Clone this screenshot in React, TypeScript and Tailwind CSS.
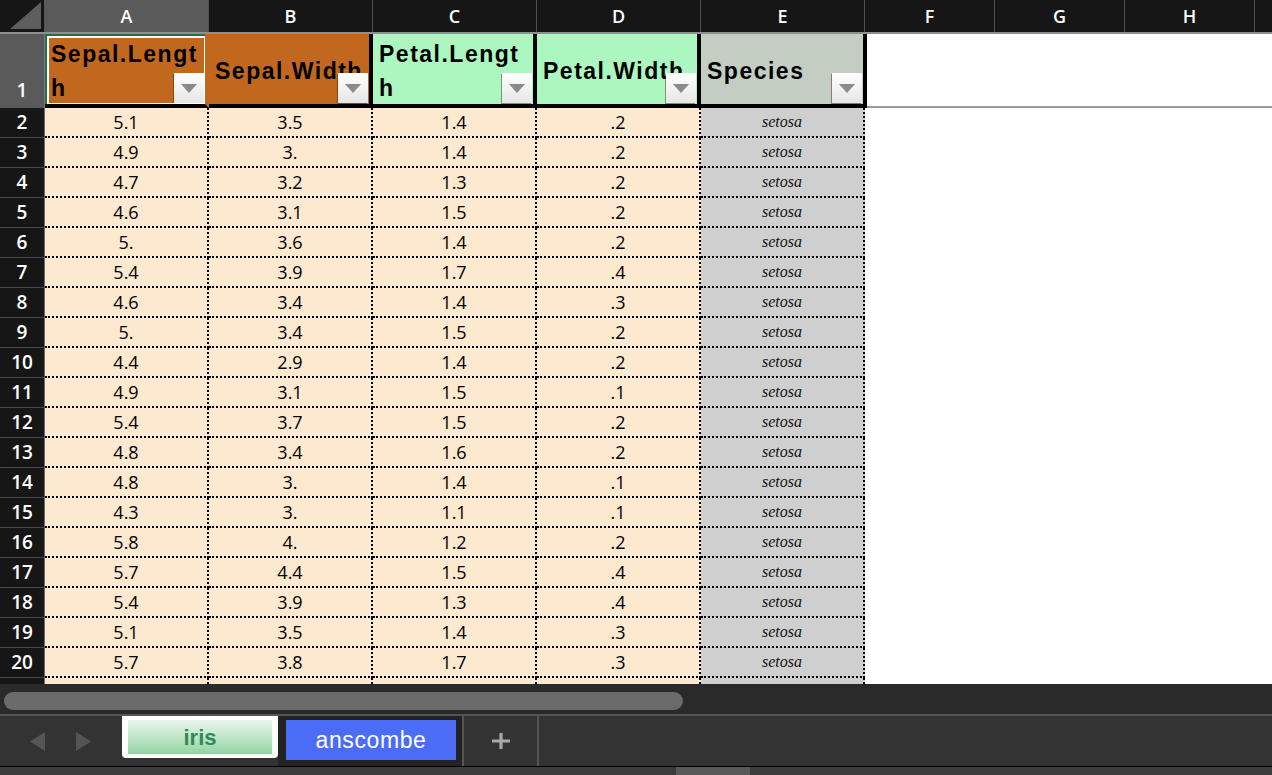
import React from "react";

const rows: [string, string, string, string][] = [
  ["5.1", "3.5", "1.4", ".2"],
  ["4.9", "3.", "1.4", ".2"],
  ["4.7", "3.2", "1.3", ".2"],
  ["4.6", "3.1", "1.5", ".2"],
  ["5.", "3.6", "1.4", ".2"],
  ["5.4", "3.9", "1.7", ".4"],
  ["4.6", "3.4", "1.4", ".3"],
  ["5.", "3.4", "1.5", ".2"],
  ["4.4", "2.9", "1.4", ".2"],
  ["4.9", "3.1", "1.5", ".1"],
  ["5.4", "3.7", "1.5", ".2"],
  ["4.8", "3.4", "1.6", ".2"],
  ["4.8", "3.", "1.4", ".1"],
  ["4.3", "3.", "1.1", ".1"],
  ["5.8", "4.", "1.2", ".2"],
  ["5.7", "4.4", "1.5", ".4"],
  ["5.4", "3.9", "1.3", ".4"],
  ["5.1", "3.5", "1.4", ".3"],
  ["5.7", "3.8", "1.7", ".3"],
];

const letters = ["A", "B", "C", "D", "E", "F", "G", "H"];

const sans = "font-['Open_Sans','Noto_Sans',sans-serif]";
const arial = "font-['Liberation_Sans',Arial,sans-serif]";

function FilterButton() {
  return (
    <div className="absolute right-[1px] bottom-[1px] w-[30px] h-[30px] bg-gradient-to-b from-white to-[#e6e6e6] shadow-[-1px_1px_0_rgba(60,30,0,0.45)] flex items-center justify-center">
      <svg width="16" height="9" viewBox="0 0 16 9">
        <path d="M0 0H16L8 9Z" fill="#8a8a8a" />
      </svg>
    </div>
  );
}

function HeaderCell({
  bg,
  lines,
  selected,
  last,
}: {
  bg: string;
  lines: string[];
  selected?: boolean;
  last?: boolean;
}) {
  return (
    <div
      className={`relative w-[164px] h-full shrink-0 border-b-[4px] border-b-black border-r-[4px] ${
        selected ? "border-r-transparent" : "border-r-black"
      } ${last ? "w-[166px]" : ""} ${bg} flex items-center pl-[6px] pt-[4px] overflow-hidden`}
    >
      <div className={`${arial} font-bold text-[23px] leading-[34px] tracking-[1.5px] text-black whitespace-nowrap`}>
        {lines.map((l, i) => (
          <div key={i}>{l}</div>
        ))}
      </div>
      <FilterButton />
      {selected && (
        <>
          <div className="absolute left-0 top-0 right-[-3px] bottom-[-3px] border-2 border-[#1f7244] shadow-[inset_0_0_0_2px_white] pointer-events-none" />
          <div className="absolute right-[-7px] bottom-[-9px] w-[9px] h-[9px] bg-[#1f7244] border border-white" />
        </>
      )}
    </div>
  );
}

function DataRow({ n, values }: { n?: number; values?: [string, string, string, string] }) {
  return (
    <div className="flex h-[30px] shrink-0">
      <div className={`w-[45px] shrink-0 bg-[#161616] border-r border-[#6b6b6b] border-b border-b-[#4a4a4a] flex items-center justify-center text-white text-[19px] font-semibold ${sans}`}>
        {n}
      </div>
      {[0, 1, 2, 3].map((j) => (
        <div
          key={j}
          className={`w-[164px] shrink-0 bg-[#fde9d0] border-r-2 border-b-2 border-dotted border-black flex items-center justify-center text-[18px] text-black ${sans}`}
        >
          {values?.[j]}
        </div>
      ))}
      <div className="w-[164px] shrink-0 bg-[#cfcfcf] border-r-2 border-b-2 border-dotted border-black flex items-center justify-center text-[16px] italic text-[#111] font-['Liberation_Serif','Times_New_Roman',serif]">
        {values ? "setosa" : ""}
      </div>
      <div className="flex-1 bg-white" />
    </div>
  );
}

export default function App() {
  return (
    <div className="w-[1272px] h-[775px] flex flex-col overflow-hidden bg-white">
      {/* grid */}
      <div className="h-[684px] shrink-0 overflow-hidden flex flex-col">
        {/* column letters */}
        <div className="flex h-[34px] shrink-0 bg-[#161616] border-b-2 border-[#8f8f8f]">
          <div className="relative w-[45px] shrink-0 border-r border-[#555]">
            <svg className="absolute left-0 top-0" width="44" height="32" viewBox="0 0 44 32">
              <path d="M10 29H41V2Z" fill="#5e5e5e" />
            </svg>
          </div>
          {letters.map((l, i) => (
            <div
              key={l}
              className={`${i < 5 ? "w-[164px]" : "w-[130px]"} shrink-0 border-r border-[#505050] flex items-center justify-center text-white text-[18px] font-semibold ${sans} ${
                i === 0 ? "bg-[#5a5a5a]" : ""
              }`}
            >
              {l}
            </div>
          ))}
          <div className="flex-1" />
        </div>

        {/* row 1 */}
        <div className="flex h-[74px] shrink-0">
          <div className={`w-[45px] shrink-0 bg-[#5a5a5a] border-r border-[#7a7a7a] flex items-end justify-center pb-[4px] text-white text-[19px] font-semibold ${sans}`}>
            1
          </div>
          <HeaderCell bg="bg-[#c2681e]" lines={["Sepal.Lengt", "h"]} selected />
          <HeaderCell bg="bg-[#c2681e]" lines={["Sepal.Width"]} />
          <HeaderCell bg="bg-[#abf7bf]" lines={["Petal.Lengt", "h"]} />
          <HeaderCell bg="bg-[#abf7bf]" lines={["Petal.Width"]} />
          <HeaderCell bg="bg-[#c3cdc2]" lines={["Species"]} last />
          <div className="flex-1 h-[74px] border-b-2 border-[#9a9a9a]" />
        </div>

        {/* data rows */}
        {rows.map((r, idx) => (
          <DataRow key={idx} n={idx + 2} values={r} />
        ))}
        <DataRow />
      </div>

      {/* scrollbar */}
      <div className="h-[32px] shrink-0 bg-[#2a2a2a] border-b-2 border-[#555] pt-[8px] px-[4px]">
        <div className="w-[679px] h-[18px] rounded-full bg-[#6b6b6b]" />
      </div>

      {/* sheet tabs */}
      <div className="h-[50px] shrink-0 bg-[#333333] flex items-start">
        <div className="w-[122px] h-full shrink-0 flex items-center pl-[30px] gap-[31px]">
          <svg width="15" height="19" viewBox="0 0 15 19">
            <path d="M15 0V19L0 9.5Z" fill="#555" />
          </svg>
          <svg width="15" height="19" viewBox="0 0 15 19">
            <path d="M0 0V19L15 9.5Z" fill="#555" />
          </svg>
        </div>
        <div className="w-[156px] h-[42px] shrink-0 bg-white rounded-b-[4px] px-[6px] pt-[4px] pb-[4px]">
          <div className={`h-full bg-gradient-to-b from-[#eaf6ee] to-[#93d4a3] flex items-center justify-center text-[22px] font-bold text-[#2e8a57] ${arial}`}>
            iris
          </div>
        </div>
        <div className="w-[186px] h-full shrink-0 bg-[#232323] border-r-2 border-[#555] pl-[8px] pt-[4px]">
          <div className={`w-[170px] h-[40px] bg-[#4a6cf7] flex items-center justify-center text-white text-[23px] tracking-[0.6px] ${arial}`}>
            anscombe
          </div>
        </div>
        <div className="w-[75px] h-full shrink-0 border-r-2 border-[#555] flex items-center justify-center">
          <svg width="20" height="16" viewBox="0 0 20 16">
            <path d="M10 0V16M1 8H19" stroke="#a9a9a9" strokeWidth="3.2" />
          </svg>
        </div>
        <div className="flex-1" />
      </div>

      {/* bottom strip */}
      <div className="flex-1 bg-[#3c3c3c] border-t border-black flex">
        <div className="ml-[676px] w-[74px] h-full bg-[#595959]" />
      </div>
    </div>
  );
}
